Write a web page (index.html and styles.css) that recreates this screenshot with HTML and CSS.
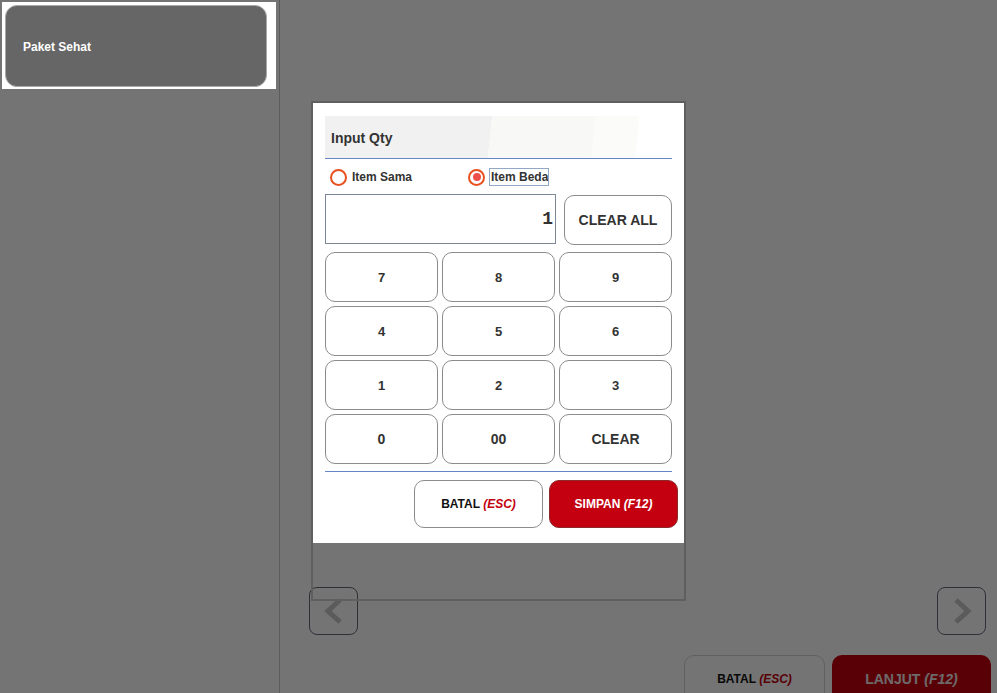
FILE: index.html
```html
<!DOCTYPE html>
<html>
<head>
<link rel="stylesheet" href="styles.css">
</head>
<body>
<div class="layout">
  <div class="sidebar">
    <div class="menu-card">
      <div class="menu-item">Paket Sehat</div>
    </div>
  </div>
  <div class="main">
    <div class="main-content"></div>
    <div class="pager">
      <div class="pager-btn">
        <svg width="24" height="28" viewBox="0 0 24 28"><path d="M18 3 L6 14 L18 25" fill="none" stroke="#c8c8c8" stroke-width="5"/></svg>
      </div>
      <div class="pager-btn">
        <svg width="24" height="28" viewBox="0 0 24 28"><path d="M6 3 L18 14 L6 25" fill="none" stroke="#c8c8c8" stroke-width="5"/></svg>
      </div>
    </div>
    <div class="actions">
      <div class="btn btn-cancel"><span>BATAL <em>(ESC)</em></span></div>
      <div class="btn btn-next"><span>LANJUT <em>(F12)</em></span></div>
    </div>
  </div>
</div>

<div class="overlay"></div>

<div class="dialog">
  <div class="dialog-panel">
    <div class="dialog-title">Input Qty</div>
    <div class="radio-row">
      <label class="radio"><span class="radio-dot"></span>Item Sama</label>
      <label class="radio checked"><span class="radio-dot"></span><span class="focus">Item Beda</span></label>
    </div>
    <div class="qty-row">
      <div class="qty-input">1</div>
      <div class="key key-clear-all">CLEAR ALL</div>
    </div>
    <div class="keypad">
      <div class="key">7</div>
      <div class="key">8</div>
      <div class="key">9</div>
      <div class="key">4</div>
      <div class="key">5</div>
      <div class="key">6</div>
      <div class="key">1</div>
      <div class="key">2</div>
      <div class="key">3</div>
      <div class="key">0</div>
      <div class="key">00</div>
      <div class="key">CLEAR</div>
    </div>
    <div class="dialog-footer">
      <div class="dbtn dbtn-cancel"><span>BATAL <em>(ESC)</em></span></div>
      <div class="dbtn dbtn-save"><span>SIMPAN <em>(F12)</em></span></div>
    </div>
  </div>
</div>
</body>
</html>
```

FILE: styles.css
```css
html, body {
  margin: 0;
  height: 100%;
  overflow: hidden;
}
body {
  background: #fff;
  font-family: "Liberation Sans", Arial, sans-serif;
  color: #333;
}

.layout {
  display: flex;
  height: 693px;
}

/* left menu */
.sidebar {
  width: 280px;
  border-right: 1px solid #cbcbcb;
  padding: 2px 0 0 2px;
  box-sizing: border-box;
}
.menu-card {
  position: relative;
  z-index: 20;
  width: 274px;
  height: 87px;
  background: #fff;
  padding: 3px 9px 2px 3px;
  box-sizing: border-box;
}
.menu-item {
  height: 100%;
  background: #666;
  border: 1px solid #a9a9a9;
  border-radius: 12px;
  box-sizing: border-box;
  display: flex;
  align-items: center;
  padding: 2px 0 0 17px;
  color: #fff;
  font-size: 12px;
  font-weight: bold;
}

/* main area */
.main {
  flex: 1;
  display: flex;
  flex-direction: column;
}
.main-content {
  flex: 1;
}
.pager {
  display: flex;
  justify-content: space-between;
  padding: 0 11px 0 29px;
  margin-bottom: 20px;
}
.pager-btn {
  width: 49px;
  height: 48px;
  box-sizing: border-box;
  border: 1px solid #6d6578;
  border-radius: 8px;
  display: flex;
  align-items: center;
  justify-content: center;
}
.actions {
  display: flex;
  justify-content: flex-end;
  gap: 7px;
  padding-right: 6px;
  margin-bottom: -10px;
}
.btn {
  height: 48px;
  border-radius: 10px;
  box-sizing: border-box;
  display: flex;
  align-items: center;
  justify-content: center;
  font-size: 12px;
  font-weight: bold;
}
.btn em, .dbtn em {
  font-style: italic;
}
.btn-cancel {
  width: 141px;
  border: 1px solid #d4d4d4;
  background: #fff;
  color: #111;
}
.btn-cancel em {
  color: #c40010;
}
.btn-next {
  width: 159px;
  background: #c40010;
  color: #f0e8e8;
  font-size: 14px;
}

.overlay {
  position: fixed;
  inset: 0;
  background: rgba(0, 0, 0, 0.545);
  z-index: 10;
}

/* quantity dialog */
.dialog {
  position: fixed;
  left: 311px;
  top: 101px;
  width: 375px;
  height: 500px;
  border: 2px solid #5f5f5f;
  box-sizing: border-box;
  z-index: 30;
}
.dialog-panel {
  background: #fff;
  height: 440px;
  padding: 13px 12px 0 12px;
  box-sizing: border-box;
}
.dialog-title {
  height: 43px;
  border-bottom: 1px solid #6686c6;
  background: linear-gradient(96deg, #f1f1f1 0 47.5%, #f8f8f6 47.5% 77%, #fbfbfa 77% 89.5%, #fff 89.5%);
  display: flex;
  align-items: center;
  padding: 2px 0 0 6px;
  box-sizing: border-box;
  font-size: 14px;
  font-weight: bold;
  color: #333;
}
.radio-row {
  height: 35px;
  display: flex;
  align-items: center;
  padding: 1px 0 0 5px;
  box-sizing: border-box;
}
.radio {
  display: flex;
  align-items: center;
  font-size: 12px;
  font-weight: bold;
  color: #333;
  width: 138px;
}
.radio-dot {
  width: 17px;
  height: 17px;
  border: 2px solid #e8501e;
  border-radius: 50%;
  box-sizing: border-box;
  background: #fff;
  margin-right: 5px;
  position: relative;
}
.radio.checked .radio-dot::after {
  content: "";
  position: absolute;
  left: 2.5px;
  top: 2.5px;
  width: 8px;
  height: 8px;
  border-radius: 50%;
  background: #ef4f4a;
}
.focus {
  outline: 1px solid #93a8c4;
  padding: 1px 0 1px 1px;
}
.qty-row {
  display: flex;
  gap: 8px;
  align-items: flex-start;
}
.qty-input {
  width: 231px;
  height: 50px;
  border: 1px solid #7a8796;
  box-sizing: border-box;
  display: flex;
  align-items: center;
  justify-content: flex-end;
  padding-right: 2px;
  font-family: "Liberation Mono", "Courier New", monospace;
  font-weight: bold;
  font-size: 18px;
  color: #333;
}
.key {
  height: 50px;
  border: 1px solid #8c8c8c;
  border-radius: 10px;
  box-sizing: border-box;
  background: #fff;
  display: flex;
  align-items: center;
  justify-content: center;
  font-size: 13px;
  font-weight: bold;
  color: #333;
}
.key-clear-all {
  flex: 1;
  margin-top: 1px;
  font-size: 14px;
}
.keypad {
  margin-top: 7px;
  display: grid;
  grid-template-columns: repeat(3, 1fr);
  gap: 4px;
  padding-bottom: 7px;
  border-bottom: 1px solid #6686c6;
}
.key:nth-child(n+10) {
  font-size: 14px;
}
.dialog-footer {
  display: flex;
  justify-content: flex-end;
  gap: 6px;
  margin: 8px -6px 0 0;
}
.dbtn {
  width: 129px;
  height: 48px;
  border-radius: 10px;
  box-sizing: border-box;
  display: flex;
  align-items: center;
  justify-content: center;
  font-size: 12px;
  font-weight: bold;
}
.dbtn-cancel {
  border: 1px solid #8c8c8c;
  background: #fff;
  color: #111;
}
.dbtn-cancel em {
  color: #c40010;
}
.dbtn-save {
  background: #c40010;
  border: 1px solid #8a2a2a;
  color: #fff;
}
```
